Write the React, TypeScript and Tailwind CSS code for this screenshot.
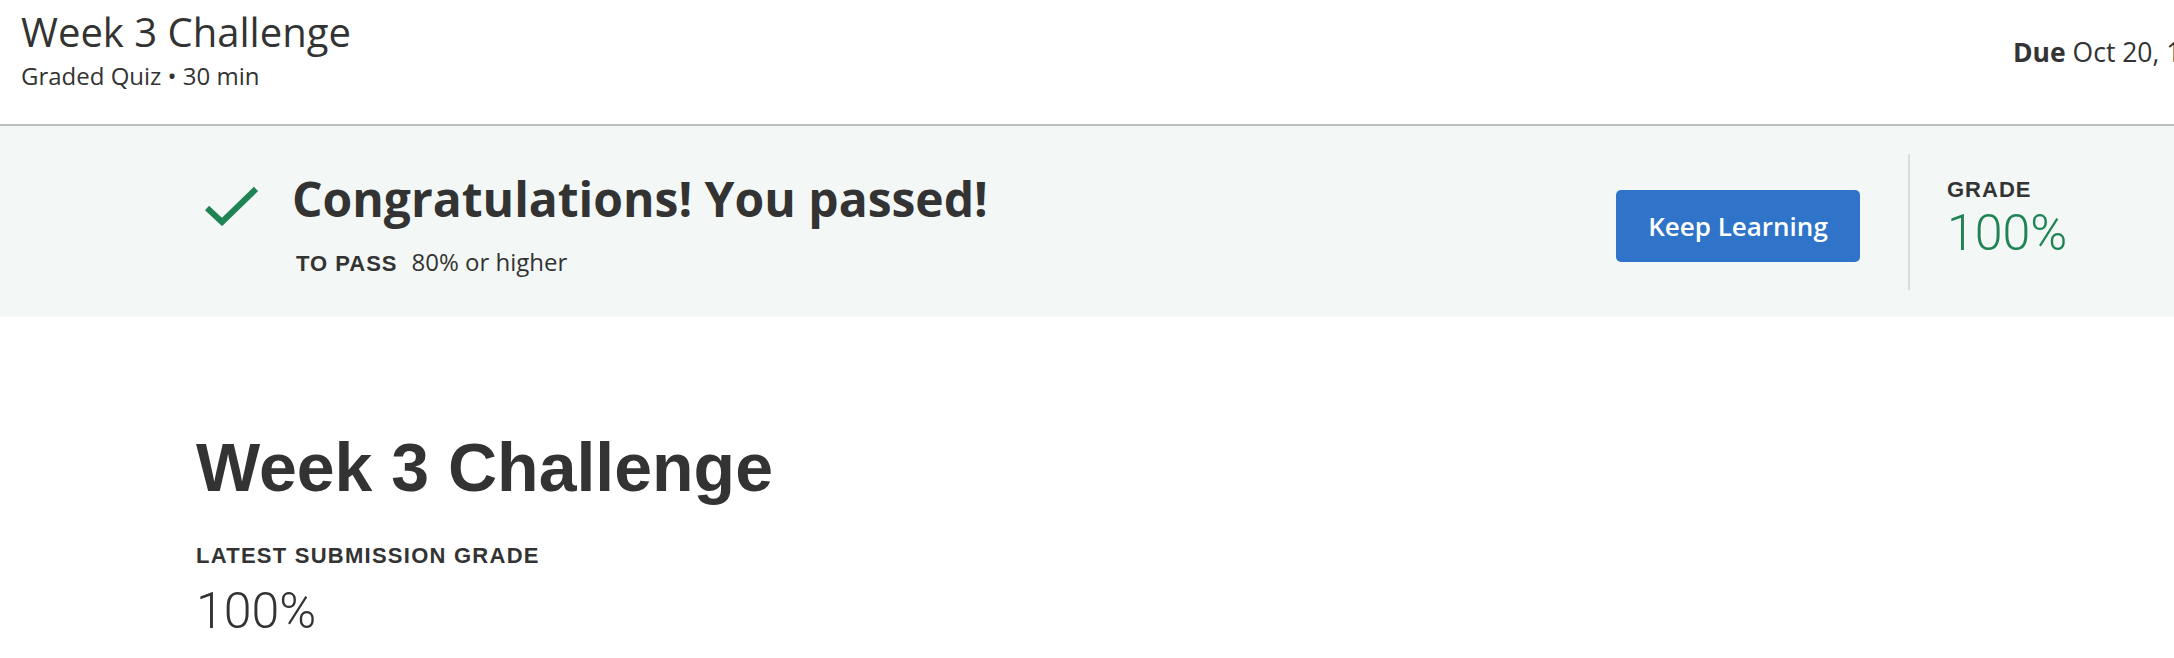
import React from "react";

export default function App() {
  return (
    <div className="w-[2174px] h-[658px] overflow-hidden bg-white text-[#333333]">
      {/* Header */}
      <div className="flex h-[124px] border-b-2 border-[#bdbdbd] box-content">
        <div className="flex-1 pl-[21px] pt-[8px]">
          <div className="font-['Open_Sans',sans-serif] text-[40px] leading-[47px]">Week 3 Challenge</div>
          <div className="mt-[6px] font-['Open_Sans',sans-serif] text-[24px] leading-[30px]">Graded Quiz • 30 min</div>
        </div>
        <div className="w-[161px] shrink-0 pt-[34px] whitespace-nowrap font-['Open_Sans',sans-serif] text-[26.5px] leading-[36px]">
          <span className="font-bold">Due</span> Oct 20, 11:59 PM PDT
        </div>
      </div>

      {/* Banner */}
      <div className="flex h-[191px] bg-[#f3f8f6]">
        <div className="flex items-start pl-[205px] pt-[44px]">
          <svg className="mt-[15px] w-[53px] h-[41px]" viewBox="0 0 53 41" fill="none">
            <polyline points="2,23 17,37 51,4" stroke="#1f8354" strokeWidth="6" strokeLinejoin="miter" />
          </svg>
          <div className="ml-[34px] flex flex-col">
            <div className="font-['Open_Sans',sans-serif] font-bold text-[48px] leading-[58px] whitespace-nowrap">
              Congratulations! You passed!
            </div>
            <div className="mt-[17px] flex items-baseline pl-[4px]">
              <span className="font-['Liberation_Sans',Arial,sans-serif] font-bold text-[22px] leading-[33px] tracking-[1px]">TO PASS</span>
              <span className="ml-[14px] font-['Open_Sans',sans-serif] text-[24px] leading-[33px]">80% or higher</span>
            </div>
          </div>
        </div>
        <div className="flex-1" />
        <div className="flex items-start pr-[77px]">
          <button className="mt-[64px] w-[244px] h-[72px] rounded-[5px] bg-[#2f74c9] text-white font-['Open_Sans',sans-serif] font-semibold text-[26px] flex items-center justify-center">
            Keep Learning
          </button>
          <div className="ml-[48px] mt-[28px] w-[2px] h-[136px] bg-[#dcdcdc]" />
          <div className="ml-[37px] mt-[51px] w-[150px]">
            <div className="font-['Liberation_Sans',Arial,sans-serif] font-bold text-[22px] leading-[26px] tracking-[1px]">GRADE</div>
            <div className="mt-[6px] font-['Roboto',sans-serif] font-light text-[50px] leading-[48px] text-[#1f8354]">100%</div>
          </div>
        </div>
      </div>

      {/* Content */}
      <div className="pl-[196px] pt-[110px]">
        <h1 className="font-['Liberation_Sans',Arial,sans-serif] font-bold text-[68px] leading-[80px]">Week 3 Challenge</h1>
        <div className="mt-[36px] font-['Liberation_Sans',Arial,sans-serif] font-bold text-[22px] leading-[26px] tracking-[1.25px]">
          LATEST SUBMISSION GRADE
        </div>
        <div className="mt-[18px] font-['Roboto',sans-serif] font-light text-[50px] leading-[48px]">100%</div>
      </div>
    </div>
  );
}
